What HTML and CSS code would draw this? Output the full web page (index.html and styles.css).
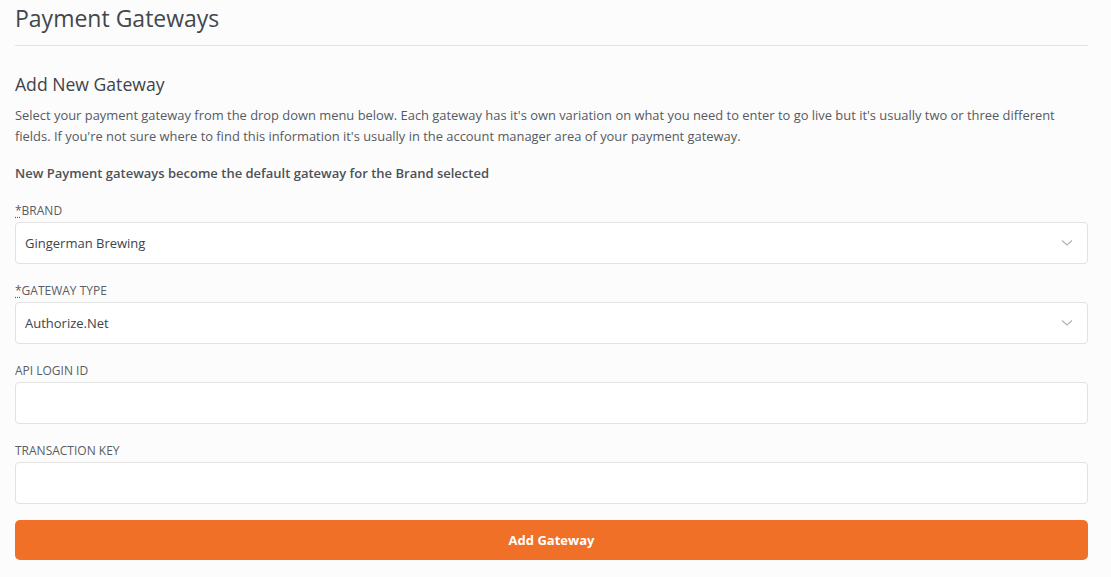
FILE: index.html
```html
<!DOCTYPE html>
<html lang="en">
<head>
<meta charset="utf-8">
<title>Payment Gateways</title>
<link rel="stylesheet" href="styles.css">
</head>
<body>
<main class="page">
  <h1 class="page-title">Payment Gateways</h1>
  <hr class="divider">
  <h2 class="section-title">Add New Gateway</h2>
  <p class="intro">Select your payment gateway from the drop down menu below. Each gateway has it's own variation on what you need to enter to go live but it's usually two or three different fields. If you're not sure where to find this information it's usually in the account manager area of your payment gateway.</p>
  <p class="note">New Payment gateways become the default gateway for the Brand selected</p>
  <form class="form">
    <div class="field">
      <label class="label"><abbr class="req" title="required">*</abbr>BRAND</label>
      <div class="select">
        <span class="select-value">Gingerman Brewing</span>
        <svg class="chevron" width="12" height="8" viewBox="0 0 12 8"><path d="M1 1.5 L6 6 L11 1.5" fill="none" stroke="#b4b4b4" stroke-width="1.3"/></svg>
      </div>
    </div>
    <div class="field">
      <label class="label"><abbr class="req" title="required">*</abbr>GATEWAY TYPE</label>
      <div class="select">
        <span class="select-value">Authorize.Net</span>
        <svg class="chevron" width="12" height="8" viewBox="0 0 12 8"><path d="M1 1.5 L6 6 L11 1.5" fill="none" stroke="#b4b4b4" stroke-width="1.3"/></svg>
      </div>
    </div>
    <div class="field">
      <label class="label">API LOGIN ID</label>
      <input class="input" type="text">
    </div>
    <div class="field">
      <label class="label">TRANSACTION KEY</label>
      <input class="input" type="text">
    </div>
    <button class="btn" type="button">Add Gateway</button>
  </form>
</main>
</body>
</html>
```
FILE: styles.css
```css
html, body {
  margin: 0;
  padding: 0;
  background: #fcfcfc;
}
body {
  font-family: "Open Sans", "Noto Sans", sans-serif;
  color: #4b4f56;
}
.page {
  padding: 0 23px 0 15px;
}
.page-title {
  margin: 0;
  padding-top: 3px;
  font-size: 23px;
  font-weight: 500;
  line-height: 30px;
  color: #43474e;
}
.divider {
  border: 0;
  border-top: 1px solid #e3e3e3;
  margin: 12px 0 0 0;
}
.section-title {
  margin: 26px 0 0 0;
  font-size: 17.6px;
  font-weight: 500;
  line-height: 24px;
  color: #3f434a;
}
.intro {
  margin: 9px 0 0 0;
  font-size: 12.92px;
  line-height: 21px;
  color: #565a61;
}
.note {
  margin: 16px 0 0 0;
  font-size: 13px;
  font-weight: 600;
  line-height: 21px;
  color: #4d5158;
}
.form {
  display: flex;
  flex-direction: column;
  gap: 19px;
  margin-top: 19px;
}
.field {
  display: flex;
  flex-direction: column;
  gap: 3px;
}
.label {
  display: block;
  height: 16px;
  font-size: 12px;
  line-height: 16px;
  color: #5a5d64;
}
.req {
  text-decoration: underline dotted;
  text-underline-offset: 2px;
}
.select, .input {
  display: block;
  box-sizing: border-box;
  height: 42px;
  width: 100%;
  margin: 0;
  background: #ffffff;
  border: 1px solid #e2e2e2;
  border-radius: 4px;
}
.select {
  display: flex;
  align-items: center;
  justify-content: space-between;
  padding: 0 14px 0 9px;
}
.select-value {
  font-size: 13px;
  color: #3f434a;
}
.input {
  font: inherit;
  padding: 0 9px;
  outline: none;
}
.btn {
  margin-top: -3px;
  height: 40px;
  width: 100%;
  border: 0;
  border-radius: 5px;
  background: #f07028;
  color: #ffffff;
  font-family: inherit;
  font-size: 13px;
  font-weight: 700;
}
```
